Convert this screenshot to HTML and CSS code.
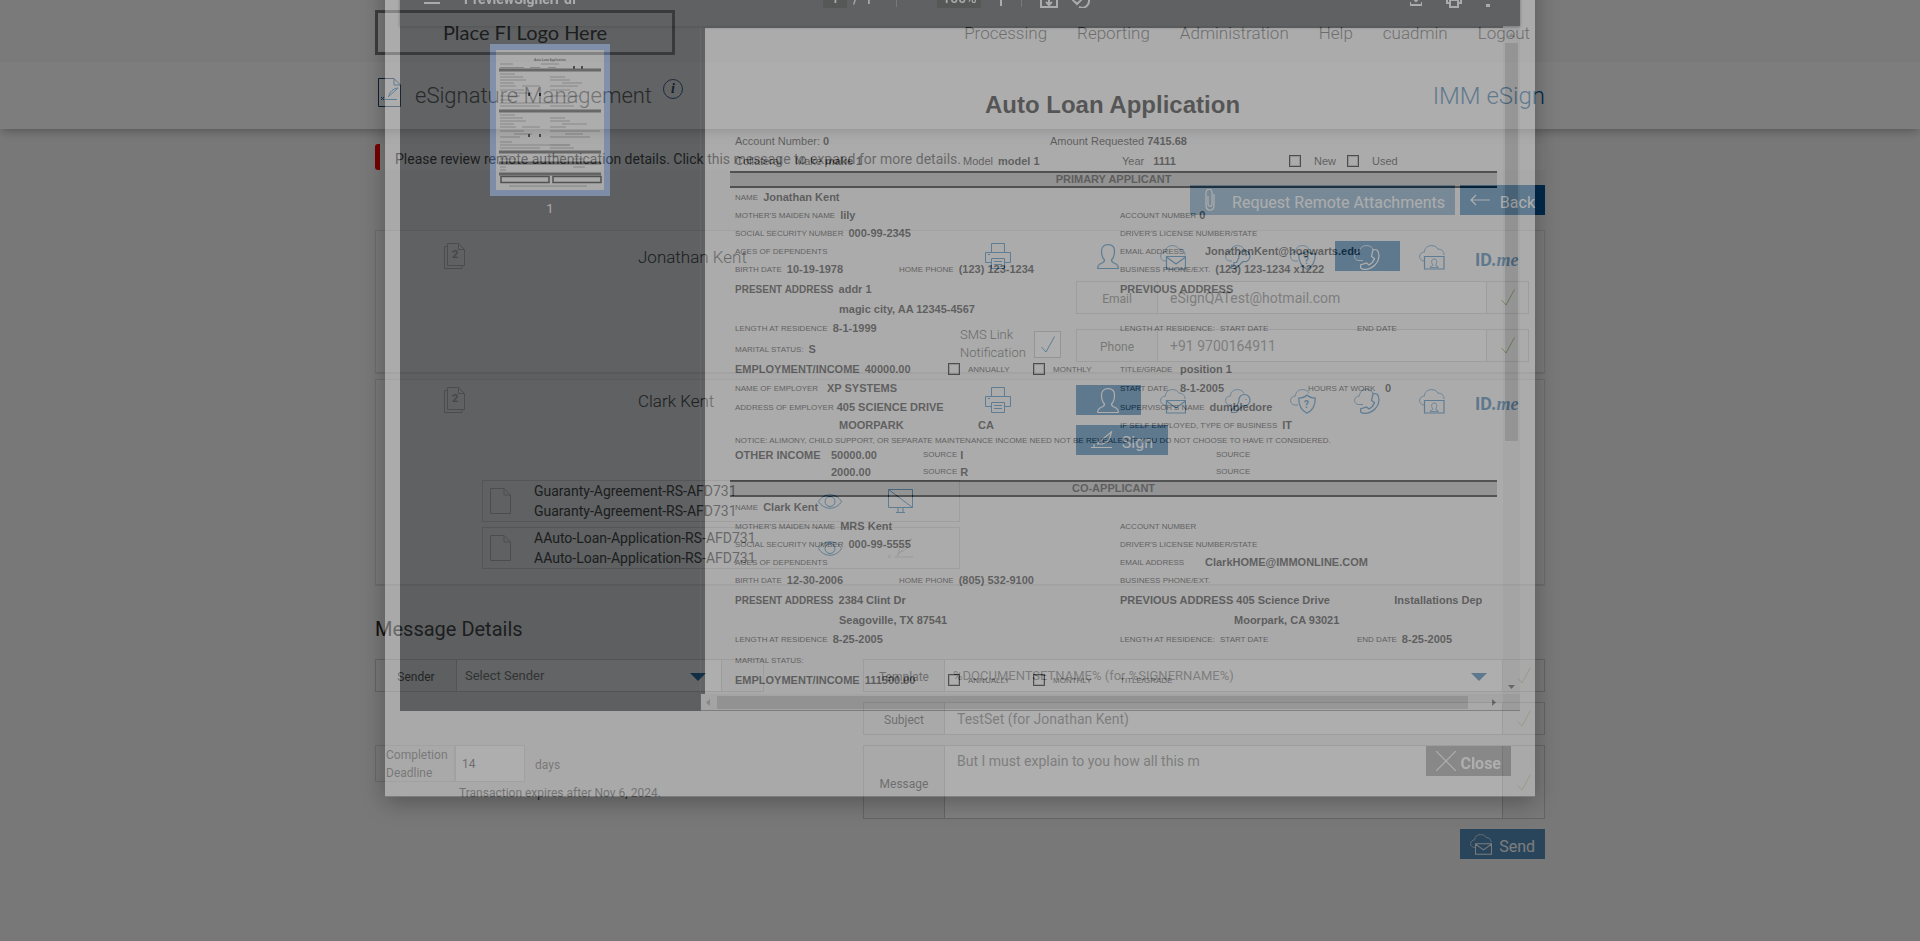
FILE: index.html
```html
<!doctype html>
<html lang="en">
    <head>
        <meta charset="UTF-8" />
        <meta name="viewport" content="width=device-width, initial-scale=1.0" />
        <title>eSignature Management</title>
        <link rel="stylesheet" href="styles.css">
    </head>
    <body>
        <!-- shared icons -->
        <svg class="sprite" aria-hidden="true">
            <symbol id="i-docs" viewBox="0 0 21 26">
                <path d="M3.500.500h11l6 6v16h-17zM14.500.500v6h6M3 3.500H.500v22h17.500V23" />
                <text x="8" y="15">2</text>
            </symbol>
            <symbol id="i-doc" viewBox="0 0 21 26">
                <path d="M.500.500h13.500l6.500 6.500v18.500H.500zM14 .500v6.500h6.500" />
            </symbol>
            <symbol id="i-print" viewBox="0 0 26 26">
                <path d="M6.500 9V.500h13V9M6.500 19.500h-6V9.500h25v10h-6M6.500 15.500h13v10h-13zM9 18.500h8M9 21.500h8M3 11.500h2" />
            </symbol>
            <symbol id="i-user" viewBox="0 0 22 26">
                <path d="M7.500 16C5 13.500 4.500 10 4.500 7c0-4 2.500-6.300 6.500-6.300S17.500 3 17.500 7c0 3-.500 6.500-3 9 0 2 1 2.500 3 3.200 2.500.800 3.800 2.300 3.800 5.300H.700c0-3 1.300-4.500 3.800-5.300 2-.700 3-1.200 3-3.200z" />
            </symbol>
            <symbol id="i-mail" viewBox="0 0 26 25">
                <path class="thin" d="M6 16C1.500 16 .500 13 .600 11 1 8.500 3 7 5.500 7 5.500 3 8.500.600 12.500.600c3.500 0 5.500 1.500 6.500 3.600 3.500-.200 6 2 6 5.800" />
                <path d="M6.500 11.500h19v12.500h-19zM6.500 12l9.500 7 9.500-7" />
            </symbol>
            <symbol id="i-key" viewBox="0 0 26 25">
                <path class="thin" d="M7 16H5C1.500 16 .500 13 .600 11 1 8.500 3 7 5.500 7 5.500 3 8.500.600 12.500.600c3.500 0 5.500 1.500 6.500 3.600" />
                <path d="M14 12.500a5.600 5.600 0 1 1 4 4L11 23.500H6.500V20H9v-2.500h2.500zM20.500 10.500h1" />
            </symbol>
            <symbol id="i-shield" viewBox="0 0 26 25">
                <path class="thin" d="M8 16H5C1.500 16 .500 13 .600 11 1 8.500 3 7 5.500 7 5.500 3 8.500.600 12.500.600c3.500 0 5.500 1.500 6.500 3.600" />
                <path d="M17 6c2 2 5 3 8.300 3 0 7.500-2.300 12.500-8.300 15.300C11 21.500 8.700 16.500 8.700 9 12 9 15 8 17 6z" />
                <text x="14" y="19">?</text>
            </symbol>
            <symbol id="i-phone" viewBox="0 0 26 25">
                <path class="thin" d="M9 15.500H5C1.500 15.500.500 13 .600 11 1 8.500 3 7 5.500 7 5.500 3 8.500.600 12.500.600c3.500 0 5.500 1.500 6.500 3.600" />
                <path d="M19 4.500l4 .500c1.500 1.500 2 4 2 6C24.500 18 19 23.500 12 24.300c-2 .200-4-.100-5.300-1.300L6.500 20l6-2 2.500 2c2.500-1.300 4.500-3.500 5.500-6.500l-3-2z" />
            </symbol>
            <symbol id="i-idcard" viewBox="0 0 26 25">
                <path class="thin" d="M5.500 16C1.500 16 .500 13 .600 11 1 8.500 3 7 5.500 7 5.500 3 8.500.600 12.500.600c3.500 0 5.500 1.500 6.500 3.600 3.500-.200 6 2 6 5.800" />
                <path d="M5.500 11.500h19.500v12.500H5.500z" />
                <path class="thin" d="M11 22.500c0-1.500 3-1.500 3-2.500-1-1-1.300-2-1.300-3.500 0-1.500 1-2.500 2.500-2.500s2.500 1 2.500 2.500c0 1.500-.300 2.500-1.300 3.500 0 1 3 1 3 2.500z" />
            </symbol>
            <symbol id="i-check" viewBox="0 0 14 17">
                <path d="M.500 11l4.500 5L13.500.500" />
            </symbol>
            <symbol id="i-eye" viewBox="0 0 24 15">
                <path d="M.500 7.500C6-1.500 18-1.500 23.500 7.500 18 16.500 6 16.500.500 7.500z" />
                <circle cx="12" cy="7.500" r="5" />
            </symbol>
            <symbol id="i-screen" viewBox="0 0 25 24">
                <path d="M.500.500h24v18H.500zM.500.500l24 18M10 19v4M15 19v4M8 23.500h9" />
            </symbol>
            <symbol id="i-feather" viewBox="0 0 25 20">
                <path d="M6 19h19M0 17l3 3M3 17l-3 3M9 18L24 1C16 3 10 8 11 14zM11 14c5 0 8-3 9-7" />
            </symbol>
            <symbol id="i-sign" viewBox="0 0 22 18">
                <path d="M0 16.500h21M3 13v3M6 13L20.500.800l-2.500 9-7 3.500M6 13h5" />
            </symbol>
        </svg>

        <header class="top-bar">
            <div class="wrap top-inner">
                <div class="logo">Place FI Logo Here</div>
                <nav class="main-nav">
                    <a href="#">Processing</a>
                    <a href="#">Reporting</a>
                    <a href="#">Administration</a>
                    <a href="#">Help</a>
                    <a href="#">cuadmin</a>
                    <a href="#">Logout</a>
                </nav>
            </div>
        </header>

        <div class="title-bar">
            <div class="wrap title-inner">
                <svg class="title-icon" viewBox="0 0 23 29">
                    <path d="M.500.500H16l6.500 6.500v21.500H.500z" />
                    <path class="feather" d="M16 .500v6.500h6.500M7 21.500h12M3 19l3 3M6 19l-3 3M10 19L20 10c-5 .500-8.500 4-9 8" />
                </svg>
                <h1>eSignature Management</h1>
                <span class="info">i</span>
                <span class="product">IMM eSign</span>
            </div>
        </div>

        <main class="wrap">
            <div class="alert">Please review remote authentication details. Click this message to expand for more details.</div>

            <div class="actions">
                <button type="button" class="btn btn-wide" disabled>
                    <svg class="icon" viewBox="0 0 10 22" width="10" height="22">
                        <path d="M9 5v11c0 7-8 7-8 0V4c0-5 6-5 6 0v11c0 3-4 3-4 0V7" />
                    </svg>
                    Request Remote Attachments
                </button>
                <button type="button" class="btn">
                    <svg class="icon arrow" viewBox="0 0 20 12" width="20" height="12">
                        <path d="M20 6H1M6 1L1 6l5 5" />
                    </svg>
                    Back
                </button>
            </div>

            <section class="signer signer-first">
                <div class="signer-info">
                    <div class="signer-name">
                        <svg class="icon muted docs"><use href="#i-docs" /></svg>
                        <span>Jonathan Kent</span>
                    </div>
                </div>
                <div class="signer-tools">
                    <button type="button" class="print" aria-label="Print"><svg class="icon"><use href="#i-print" /></svg></button>
                    <div class="sms">
                        <label for="sms-link">SMS Link Notification</label>
                        <span class="tick-box">
                            <input type="checkbox" id="sms-link" checked />
                            <svg class="icon"><use href="#i-check" /></svg>
                        </span>
                    </div>
                </div>
                <div class="auth">
                    <div class="auth-types">
                        <button type="button" aria-label="In person"><svg class="icon user"><use href="#i-user" /></svg></button>
                        <button type="button" aria-label="Email"><svg class="icon"><use href="#i-mail" /></svg></button>
                        <button type="button" aria-label="Password"><svg class="icon"><use href="#i-key" /></svg></button>
                        <button type="button" aria-label="Question"><svg class="icon"><use href="#i-shield" /></svg></button>
                        <button type="button" class="active" aria-label="Phone"><svg class="icon"><use href="#i-phone" /></svg></button>
                        <button type="button" aria-label="ID check"><svg class="icon"><use href="#i-idcard" /></svg></button>
                        <button type="button" class="idme">ID<i>.me</i></button>
                    </div>
                    <div class="field">
                        <label for="email">Email</label>
                        <input type="text" id="email" value="eSignQATest@hotmail.com" />
                        <span class="valid"><svg class="icon"><use href="#i-check" /></svg></span>
                    </div>
                    <div class="field field-phone">
                        <label for="phone">Phone</label>
                        <input type="text" id="phone" value="+91 9700164911" />
                        <span class="valid"><svg class="icon"><use href="#i-check" /></svg></span>
                    </div>
                </div>
            </section>

            <section class="signer">
                <div class="signer-info">
                    <div class="signer-name">
                        <svg class="icon muted docs"><use href="#i-docs" /></svg>
                        <span>Clark Kent</span>
                    </div>
                    <ul class="doc-list">
                        <li>
                            <svg class="icon muted doc"><use href="#i-doc" /></svg>
                            <p>Guaranty-Agreement-RS-AFD731<br />Guaranty-Agreement-RS-AFD731</p>
                            <svg class="icon eye"><use href="#i-eye" /></svg>
                            <svg class="icon screen"><use href="#i-screen" /></svg>
                        </li>
                        <li>
                            <svg class="icon muted doc"><use href="#i-doc" /></svg>
                            <p>AAuto-Loan-Application-RS-AFD731<br />AAuto-Loan-Application-RS-AFD731</p>
                            <svg class="icon eye"><use href="#i-eye" /></svg>
                            <svg class="icon screen faded"><use href="#i-feather" /></svg>
                        </li>
                    </ul>
                </div>
                <div class="signer-tools">
                    <button type="button" class="print" aria-label="Print"><svg class="icon"><use href="#i-print" /></svg></button>
                </div>
                <div class="auth">
                    <div class="auth-types">
                        <button type="button" class="active" aria-label="In person"><svg class="icon user"><use href="#i-user" /></svg></button>
                        <button type="button" aria-label="Email"><svg class="icon"><use href="#i-mail" /></svg></button>
                        <button type="button" aria-label="Password"><svg class="icon"><use href="#i-key" /></svg></button>
                        <button type="button" aria-label="Question"><svg class="icon"><use href="#i-shield" /></svg></button>
                        <button type="button" aria-label="Phone"><svg class="icon"><use href="#i-phone" /></svg></button>
                        <button type="button" aria-label="ID check"><svg class="icon"><use href="#i-idcard" /></svg></button>
                        <button type="button" class="idme">ID<i>.me</i></button>
                    </div>
                    <button type="button" class="btn btn-sign">
                        <svg class="icon" width="22" height="18"><use href="#i-sign" /></svg>
                        Sign
                    </button>
                </div>
            </section>

            <h2>Message Details</h2>
            <form class="message-form">
                <div class="form-left">
                    <div class="field">
                        <label for="sender">Sender</label>
                        <span class="select">
                            <select id="sender"><option>Select Sender</option></select>
                        </span>
                        <span class="valid"></span>
                    </div>
                    <div class="deadline">
                        <label for="days">Completion Deadline</label>
                        <input type="text" id="days" value="14" />
                        <span>days</span>
                    </div>
                    <p class="expires">Transaction expires after Nov 6, 2024.</p>
                </div>
                <div class="form-right">
                    <div class="field">
                        <label for="template">Template</label>
                        <span class="select">
                            <select id="template"><option>%DOCUMENTSETNAME% (for %SIGNERNAME%)</option></select>
                        </span>
                        <span class="valid"><svg class="icon"><use href="#i-check" /></svg></span>
                    </div>
                    <div class="field">
                        <label for="subject">Subject</label>
                        <input type="text" id="subject" value="TestSet (for Jonathan Kent)" />
                        <span class="valid"><svg class="icon"><use href="#i-check" /></svg></span>
                    </div>
                    <div class="field field-tall">
                        <label for="message">Message</label>
                        <textarea id="message">But I must explain to you how all this m</textarea>
                        <span class="valid"><svg class="icon"><use href="#i-check" /></svg></span>
                    </div>
                    <button type="button" class="btn btn-send" disabled>
                        <svg class="icon" width="22" height="21"><use href="#i-mail" /></svg>
                        Send
                    </button>
                </div>
            </form>
        </main>

        <div class="backdrop"></div>

        <!-- document preview, part way through its fade -->
        <div class="modal">
            <div class="dialog">
                <div class="viewer">
                    <div class="toolbar">
                        <svg class="tool menu" viewBox="0 0 16 12"><path d="M0 1h16M0 6h16M0 11h16" /></svg>
                        <span class="file-name">PreviewSignerPdf</span>
                        <div class="tool-center">
                            <span class="page-box">1</span>
                            <span>/</span>
                            <span>1</span>
                            <span class="divider"></span>
                            <span class="zoom-box">100%</span>
                            <svg class="tool plus" viewBox="0 0 14 14" width="14" height="14"><path d="M7 0v14M0 7h14" /></svg>
                            <span class="divider short"></span>
                            <svg class="tool" viewBox="0 0 18 18" width="18" height="18"><path d="M1 1h16v16H1zM9 4v10M6 12l3 3 3-3" /></svg>
                            <svg class="tool" viewBox="0 0 18 18" width="18" height="18"><path d="M3 5l5-3v5M8 4a7 7 0 1 1-1 13M1 10l4-4 4 4-4 4z" /></svg>
                        </div>
                        <div class="tool-right">
                            <svg class="tool" viewBox="0 0 12 14" width="12" height="14"><path d="M6 0v8M2 5l4 4 4-4M0 10v3h12v-3" /></svg>
                            <svg class="tool" viewBox="0 0 16 18" width="16" height="18"><path d="M4 5V1h8v4M4 13H1V5h14v8h-3M4 10h8v7H4z" /></svg>
                            <svg class="tool" viewBox="0 0 4 16" width="4" height="16"><path d="M1 1h2v1H1zM1 7h2v1H1zM1 14h2v1H1z" /></svg>
                        </div>
                    </div>
                    <div class="viewer-body">
                        <aside class="thumbs">
                            <svg class="thumb" viewBox="0 0 108 140">
                                <text x="54" y="11">Auto Loan Application</text>
                                <g class="bars">
                                    <path d="M3 20h102M3 61h102M3 102h102M3 113h102M3 124h102" />
                                </g>
                                <g class="lines">
                                    <path d="M4 14h13M45 14h18M4 17.500h24M34 17.500h10M52 17.500h8" />
                                    <path d="M4 24h15M4 27h23M54 27h15M4 30h26M54 30h20M4 33h14M66 33h20M4 36h16M26 36h18M54 36h28" />
                                    <path d="M4 40h24M54 40h20M18 43h18M4 46h20M54 46h30M4 50h12M4 53h50M54 53h20M4 56h40M54 56h24" />
                                    <path d="M4 65h15M4 68h23M54 68h15M4 71h26M54 71h20M4 74h14M66 74h25M4 77h16M26 77h18M54 77h16" />
                                    <path d="M4 81h24M54 81h50M18 84h18M69 84h18M4 87h20M54 87h40M4 92h12M4 95h70M54 95h20M4 98h40M54 98h24" />
                                    <path d="M4 106h10M54 106h14M4 109h16M77 109h10M4 117h6M77 117h12M4 120h6M13 136h78" />
                                </g>
                                <path class="boxes" d="M5 126.500h48v6H5zM57 126.500h48v6H57z" />
                                <path class="dots" d="M77 16h2v3h-2zM85 16h2v3h-2zM32 43h2v3h-2zM43 43h2v3h-2zM32 84h2v3h-2zM43 84h2v3h-2z" />
                            </svg>
                            <span>1</span>
                        </aside>
                        <div class="paper-area">
                            <article class="paper">
                                <h3>Auto Loan Application</h3>
                                <div class="row r20 big">
                                    <div class="half w315"><span>Account Number:</span><b class="near">0</b></div>
                                    <div class="half"><span>Amount Requested</span><b class="near">7415.68</b></div>
                                </div>
                                <div class="row r20 big">
                                    <span class="w60">Collateral</span>
                                    <span class="w168">Make<b class="near">make 1</b></span>
                                    <span class="w159">Model<b>model 1</b></span>
                                    <span class="w167">Year<b class="far">1111</b></span>
                                    <span class="check"><input type="checkbox" id="new" /><label for="new">New</label></span>
                                    <span class="check"><input type="checkbox" id="used" /><label for="used">Used</label></span>
                                </div>
                                <h4>PRIMARY APPLICANT</h4>
                                <div class="row"><span>NAME</span><b>Jonathan Kent</b></div>
                                <div class="row">
                                    <div class="half"><span>MOTHER'S MAIDEN NAME</span><b>lily</b></div>
                                    <div class="half"><span>ACCOUNT NUMBER</span><b class="near">0</b></div>
                                </div>
                                <div class="row">
                                    <div class="half"><span>SOCIAL SECURITY NUMBER</span><b>000-99-2345</b></div>
                                    <div class="half"><span>DRIVER'S LICENSE NUMBER/STATE</span></div>
                                </div>
                                <div class="row">
                                    <div class="half"><span>AGES OF DEPENDENTS</span></div>
                                    <div class="half"><span class="w80">EMAIL ADDRESS</span><b>JonathanKent@hogwarts.edu</b></div>
                                </div>
                                <div class="row">
                                    <div class="half"><div class="w164"><span>BIRTH DATE</span><b>10-19-1978</b></div><span>HOME PHONE</span><b>(123) 123-1234</b></div>
                                    <div class="half"><span>BUSINESS PHONE/EXT.</span><b>(123) 123-1234 x1222</b></div>
                                </div>
                                <div class="row r22">
                                    <div class="half"><strong>PRESENT ADDRESS</strong><b>addr 1</b></div>
                                    <div class="half"><em>PREVIOUS ADDRESS</em></div>
                                </div>
                                <div class="row"><b class="indent">magic city, AA 12345-4567</b></div>
                                <div class="row r20">
                                    <div class="half"><span>LENGTH AT RESIDENCE</span><b>8-1-1999</b></div>
                                    <div class="half"><span class="w100">LENGTH AT RESIDENCE:</span><span class="w137">START DATE</span><span>END DATE</span></div>
                                </div>
                                <div class="row r22"><span>MARITAL STATUS:</span><b>S</b></div>
                                <div class="row">
                                    <div class="half">
                                        <div class="w213"><em>EMPLOYMENT/INCOME</em><b>40000.00</b></div>
                                        <span class="check"><input type="checkbox" id="annual-1" /><label for="annual-1">ANNUALLY</label></span>
                                        <span class="check"><input type="checkbox" id="month-1" /><label for="month-1">MONTHLY</label></span>
                                    </div>
                                    <div class="half"><span class="w55">TITLE/GRADE</span><b>position 1</b></div>
                                </div>
                                <div class="row r20">
                                    <div class="half"><span class="w87">NAME OF EMPLOYER</span><b>XP SYSTEMS</b></div>
                                    <div class="half"><div class="w188"><span class="w55">START DATE</span><b>8-1-2005</b></div><span class="w72">HOURS AT WORK</span><b>0</b></div>
                                </div>
                                <div class="row">
                                    <div class="half"><span>ADDRESS OF EMPLOYER</span><b class="near">405 SCIENCE DRIVE</b></div>
                                    <div class="half"><span>SUPERVISOR'S NAME</span><b>dumbledore</b></div>
                                </div>
                                <div class="row">
                                    <div class="half"><b class="indent w134">MOORPARK</b><b>CA</b></div>
                                    <div class="half"><span>IF SELF EMPLOYED, TYPE OF BUSINESS</span><b>IT</b></div>
                                </div>
                                <div class="row r12"><span>NOTICE: ALIMONY, CHILD SUPPORT, OR SEPARATE MAINTENANCE INCOME NEED NOT BE REVEALED IF YOU DO NOT CHOOSE TO HAVE IT CONSIDERED.</span></div>
                                <div class="row r17">
                                    <div class="half"><div class="w188"><em class="w91">OTHER INCOME</em><b>50000.00</b></div><span>SOURCE</span><b class="near">I</b></div>
                                    <div class="half"><span class="source">SOURCE</span></div>
                                </div>
                                <div class="row r17">
                                    <div class="half"><div class="w188"><em class="w91"></em><b>2000.00</b></div><span>SOURCE</span><b class="near">R</b></div>
                                    <div class="half"><span class="source">SOURCE</span></div>
                                </div>
                                <h4>CO-APPLICANT</h4>
                                <div class="row r20"><span>NAME</span><b>Clark Kent</b></div>
                                <div class="row">
                                    <div class="half"><span>MOTHER'S MAIDEN NAME</span><b>MRS Kent</b></div>
                                    <div class="half"><span>ACCOUNT NUMBER</span></div>
                                </div>
                                <div class="row">
                                    <div class="half"><span>SOCIAL SECURITY NUMBER</span><b>000-99-5555</b></div>
                                    <div class="half"><span>DRIVER'S LICENSE NUMBER/STATE</span></div>
                                </div>
                                <div class="row">
                                    <div class="half"><span>AGES OF DEPENDENTS</span></div>
                                    <div class="half"><span class="w80">EMAIL ADDRESS</span><b>ClarkHOME@IMMONLINE.COM</b></div>
                                </div>
                                <div class="row">
                                    <div class="half"><div class="w164"><span>BIRTH DATE</span><b>12-30-2006</b></div><span>HOME PHONE</span><b>(805) 532-9100</b></div>
                                    <div class="half"><span>BUSINESS PHONE/EXT.</span></div>
                                </div>
                                <div class="row r22">
                                    <div class="half"><strong>PRESENT ADDRESS</strong><b>2384 Clint Dr</b></div>
                                    <div class="half"><em>PREVIOUS ADDRESS</em><b class="near w153">405 Science Drive</b><b>Installations Dep</b></div>
                                </div>
                                <div class="row">
                                    <div class="half"><b class="indent">Seagoville, TX 87541</b></div>
                                    <div class="half"><b class="indent-right">Moorpark, CA 93021</b></div>
                                </div>
                                <div class="row r20">
                                    <div class="half"><span>LENGTH AT RESIDENCE</span><b>8-25-2005</b></div>
                                    <div class="half"><span class="w100">LENGTH AT RESIDENCE:</span><span class="w137">START DATE</span><span>END DATE</span><b>8-25-2005</b></div>
                                </div>
                                <div class="row r22"><span>MARITAL STATUS:</span></div>
                                <div class="row">
                                    <div class="half">
                                        <div class="w213"><em>EMPLOYMENT/INCOME</em><b>111500.00</b></div>
                                        <span class="check"><input type="checkbox" id="annual-2" /><label for="annual-2">ANNUALLY</label></span>
                                        <span class="check"><input type="checkbox" id="month-2" /><label for="month-2">MONTHLY</label></span>
                                    </div>
                                    <div class="half"><span>TITLE/GRADE</span></div>
                                </div>
                            </article>
                            <div class="v-scroll">
                                <svg viewBox="0 0 7 4"><path d="M0 4l3.500-4L7 4z" /></svg>
                                <div class="v-thumb"></div>
                                <svg class="on" viewBox="0 0 7 4"><path d="M0 0l3.500 4L7 0z" /></svg>
                            </div>
                            <div class="h-scroll">
                                <svg viewBox="0 0 4 7"><path d="M4 0L0 3.500 4 7z" /></svg>
                                <div class="h-thumb"></div>
                                <svg class="on" viewBox="0 0 4 7"><path d="M0 0l4 3.500L0 7z" /></svg>
                            </div>
                            <div class="corner"></div>
                        </div>
                    </div>
                </div>
                <div class="dialog-footer">
                    <button type="button" class="btn btn-close">
                        <svg class="icon" viewBox="0 0 20 20" width="20" height="20"><path d="M0 0l20 20M20 0L0 20" /></svg>
                        Close
                    </button>
                </div>
            </div>
        </div>
    </body>
</html>
```
FILE: styles.css
```css
* {
    box-sizing: border-box;
}
body {
    margin: 0;
    min-height: 100vh;
    overflow: hidden;
    background-color: #f0f0f0;
    color: #222222;
    font-family: Roboto, "Liberation Sans", sans-serif;
    font-size: 14px;
    font-weight: 300;
}
p,
h1,
h2,
h3,
h4,
ul {
    margin: 0;
    padding: 0;
    font-weight: 300;
}
button,
input,
select,
textarea {
    font: inherit;
    color: inherit;
    border: none;
    border-radius: 0;
    padding: 0;
    background: none;
}
.sprite {
    position: absolute;
    width: 0;
    height: 0;
}
.wrap {
    width: 100%;
    max-width: 1170px;
    margin: 0 auto;
}
.icon {
    fill: none;
    stroke: #0062a8;
    stroke-width: 1.2;
    flex: none;
}
#i-docs text,
#i-shield text {
    font-size: 10px;
    font-weight: 700;
    stroke: none;
    fill: #0062a8;
}
#i-docs text {
    font-size: 11px;
    fill: #a4a4a4;
}
.thin {
    stroke-width: 0.8;
}
.muted {
    stroke: #b4b4b4;
    stroke-width: 1;
}

/* header */
.top-bar {
    background-color: #f4f4f4;
    height: 62px;
}
.top-inner {
    display: flex;
    justify-content: space-between;
    padding-top: 10px;
}
.logo {
    width: 300px;
    height: 45px;
    border: 3px solid #7a7a7a;
    font-family: Lato, sans-serif;
    font-size: 20px;
    font-weight: 400;
    line-height: 38px;
    text-align: center;
}
.main-nav {
    display: flex;
    gap: 30px;
    padding: 12px 15px 0 0;
    font-size: 17px;
    line-height: 22px;
}
.main-nav a {
    color: #333333;
    text-decoration: none;
}
.title-bar {
    position: relative;
    height: 67px;
    background-color: #fbfbfb;
    box-shadow: 0 5px 8px -2px rgba(0, 0, 0, 0.25);
}
.title-inner {
    display: flex;
    align-items: flex-start;
    padding-top: 16px;
    font-size: 24px;
    line-height: 36px;
}
.title-icon {
    width: 23px;
    height: 29px;
    margin: 0 14px 0 3px;
    fill: none;
    stroke: #1f3c66;
}
.feather {
    stroke: #0062a8;
}
h1 {
    color: #444444;
    font-size: 22px;
}
.info {
    width: 20px;
    height: 20px;
    margin: 1px 0 0 11px;
    border: 1px solid #1f4a78;
    border-radius: 50%;
    color: #102a4a;
    font: italic bold 14px/18px "Liberation Serif", serif;
    text-align: center;
}
.product {
    margin-left: auto;
    color: #005599;
}

/* notice and page actions */
.alert {
    margin-top: 15px;
    height: 26px;
    padding-left: 15px;
    border-left: 5px solid #ee0000;
    border-radius: 3px;
    background-color: #f6f6f6;
    font-weight: 400;
    line-height: 30px;
}
.actions {
    display: flex;
    justify-content: flex-end;
    gap: 5px;
    margin: 15px 0;
}
.btn {
    display: flex;
    align-items: center;
    justify-content: space-between;
    width: 85px;
    height: 30px;
    padding: 4px 10px 0;
    background-color: #005599;
    color: #ffffff;
    font-size: 16px;
    font-weight: 400;
}
.btn .icon {
    stroke: #ffffff;
    margin-top: -4px;
}
.btn:disabled {
    opacity: 0.65;
}
.btn-wide {
    width: 265px;
    padding: 4px 10px 0 15px;
}

/* signer cards */
.signer {
    display: grid;
    grid-template-columns: 1fr 116px 453px;
    margin-bottom: 6px;
    padding: 5px 15px 15px 0;
    border: 1px solid #d8d8d8;
    box-shadow: 0 1px 0 #dddddd;
    background-color: #f4f4f4;
}
.signer-first {
    padding: 10px 15px 10px 0;
}
.signer-name {
    display: flex;
    align-items: center;
    height: 30px;
    padding-left: 68px;
    font-size: 17px;
}
.signer-name span {
    margin: 2px 0 0 173px;
}
.docs,
.doc {
    width: 21px;
    height: 26px;
}
.print {
    display: block;
    height: 26px;
    margin: 2px 0 0 25px;
}
.print .icon {
    width: 26px;
    height: 26px;
    stroke-width: 1;
}
.sms {
    display: flex;
    justify-content: space-between;
    align-items: center;
    margin-top: 57px;
    padding-right: 15px;
    font-size: 13px;
    line-height: 18px;
}
.sms label {
    width: 70px;
}
.tick-box {
    position: relative;
    width: 27px;
    height: 27px;
}
.tick-box input {
    appearance: none;
    width: 27px;
    height: 27px;
    margin: 0;
    border: 1px solid #b0b0b0;
    background-color: #ffffff;
}
.tick-box .icon {
    position: absolute;
    top: 5px;
    left: 7px;
    width: 14px;
    height: 17px;
    stroke-width: 1;
}
.auth-types {
    display: flex;
    margin-bottom: 10px;
}
.auth-types button {
    flex: 1;
    height: 30px;
    line-height: 30px;
}
.auth-types .icon {
    width: 26px;
    height: 25px;
    margin-top: 4px;
    vertical-align: top;
}
.auth-types .user {
    width: 22px;
    height: 26px;
    margin-top: 3px;
}
.auth-types .active {
    background-color: #005599;
}
.active .icon {
    stroke: #ffffff;
}
.auth-types .idme {
    padding-top: 4px;
    color: #005599;
    font-size: 18px;
    font-weight: 700;
}
.idme i {
    font-family: "Liberation Serif", serif;
}
.field {
    display: flex;
    height: 33px;
    border: 1px solid #c8c8c8;
}
.field-phone {
    margin-top: 15px;
}
.field label {
    width: 80px;
    flex: none;
    font-size: 12px;
    font-weight: 400;
    line-height: 34px;
    text-align: center;
    color: #555555;
}
.field input,
.field textarea,
.select {
    flex: 1;
    min-width: 0;
    padding: 0 12px;
    border: solid #c8c8c8;
    border-width: 0 1px;
    background-color: #ffffff;
    color: #666666;
    font-size: 14px;
    font-weight: 400;
}
.valid {
    display: flex;
    align-items: center;
    justify-content: center;
    flex: none;
    width: 41px;
}
.valid .icon {
    width: 14px;
    height: 17px;
    stroke: #6a9a1c;
    stroke-width: 1;
}
.btn-sign {
    width: 92px;
    padding: 4px 15px 0;
}
.doc-list {
    list-style: none;
    margin: 65px 0 0 106px;
}
.doc-list li {
    display: flex;
    align-items: center;
    height: 42px;
    padding-left: 7px;
    border: 1px solid #d0d0d0;
}
.doc-list li + li {
    margin-top: 5px;
}
.doc-list p {
    width: 284px;
    margin-left: 23px;
    font-weight: 400;
    line-height: 20px;
}
.eye {
    width: 24px;
    height: 15px;
    stroke-width: 1;
}
.screen {
    width: 25px;
    height: 24px;
    margin-left: 46px;
    stroke-width: 1;
}
.faded {
    opacity: 0.25;
    stroke: #222222;
}

/* message details */
h2 {
    margin: 29px 0 15px;
    font-size: 20px;
    font-weight: 400;
    line-height: 30px;
}
.message-form {
    display: grid;
    grid-template-columns: 389px 682px;
    justify-content: space-between;
}
.form-right {
    display: grid;
    gap: 10px;
}
.message-form .field label {
    color: #333333;
}
.message-form .valid .icon {
    opacity: 0.5;
}
.select {
    position: relative;
    padding: 0;
}
.select::after {
    content: "";
    position: absolute;
    top: 13px;
    right: 15px;
    border: solid transparent;
    border-width: 8px 8px 0;
    border-top-color: #005599;
}
select {
    appearance: none;
    width: 100%;
    height: 31px;
    padding: 0 8px;
    font-size: 13px;
}
#template {
    padding: 0 8px;
}
.message-form .field-tall {
    height: 74px;
}
.field-tall label {
    line-height: 76px;
}
.field-tall textarea {
    padding-top: 7px;
    resize: none;
}
.btn-send {
    justify-self: end;
}
.deadline {
    display: flex;
    align-items: center;
    height: 37px;
    margin-top: 53px;
    color: #555555;
    font-size: 12px;
    font-weight: 400;
}
.deadline label {
    width: 80px;
    height: 37px;
    padding-left: 10px;
    border: 1px solid #d4d4d4;
    line-height: 18px;
}
.deadline input {
    width: 70px;
    height: 37px;
    padding-left: 6px;
    border: 1px solid #d4d4d4;
    background-color: #ffffff;
    color: #333333;
}
.deadline span {
    margin: 2px 0 0 10px;
}
.expires {
    padding-left: 84px;
    color: #444444;
    font-size: 12px;
    font-weight: 400;
    line-height: 22px;
}

/* preview dialog */
.backdrop {
    position: fixed;
    inset: 0;
    background-color: rgba(0, 0, 0, 0.5);
}
.modal {
    position: fixed;
    inset: 0;
    opacity: 0.37;
}
.dialog {
    max-width: 1150px;
    margin: -45px auto 0;
    padding: 15px;
    background-color: #ffffff;
    border-bottom: 1px solid #888888;
    box-shadow: 0 5px 22px rgba(0, 0, 0, 0.8);
}
.toolbar {
    position: relative;
    display: flex;
    align-items: center;
    height: 56px;
    padding: 2px 30px 0 24px;
    background-color: #323639;
    box-shadow: 0 1px 3px rgba(0, 0, 0, 0.6);
    color: #ffffff;
    font-size: 14px;
    font-weight: 700;
}
.tool {
    fill: none;
    stroke: #ffffff;
    stroke-width: 2;
}
.menu {
    width: 16px;
    height: 12px;
    margin: -2px 24px 0 0;
}
.file-name {
    width: 112px;
}
.tool-center {
    display: flex;
    align-items: center;
    gap: 6px;
    margin-left: 247px;
    font-weight: 500;
}
.page-box,
.zoom-box {
    width: 24px;
    height: 18px;
    background-color: #191b1c;
    line-height: 16px;
    text-align: center;
}
.zoom-box {
    width: 44px;
    margin-left: 34px;
}
.plus {
    margin: 0 7px;
}
.divider {
    width: 1px;
    height: 16px;
    margin-left: 18px;
    background-color: #70757a;
}
.short {
    margin: 0 12px 0 0;
}
.tool-center .tool + .tool {
    margin-left: 8px;
}
.tool-right {
    display: flex;
    align-items: center;
    gap: 24px;
    margin-left: auto;
}
.viewer-body {
    display: flex;
    height: 685px;
    background-color: #323639;
}
.thumbs {
    width: 300px;
    padding-top: 18px;
    color: #ffffff;
    font-size: 13px;
    font-weight: 400;
    text-align: center;
}
.thumb {
    display: block;
    width: 120px;
    height: 152px;
    margin: 0 auto 5px;
    border: 6px solid #8ab4f8;
    background-color: #ffffff;
    fill: none;
    stroke: #555555;
}
.thumb text {
    fill: #333333;
    stroke: none;
    font: bold 3px "Liberation Sans", sans-serif;
    text-anchor: middle;
}
.bars {
    stroke: #444444;
    stroke-width: 3;
}
.lines {
    stroke: #999999;
    stroke-width: 1;
}
.boxes {
    stroke: #111111;
    stroke-width: 1.5;
}
.dots {
    fill: #000000;
    stroke: none;
}
.paper-area {
    flex: 1;
    display: grid;
    grid-template-columns: 1fr 17px;
    grid-template-rows: 668px 17px;
    min-width: 0;
    border-left: 1px solid #42474b;
}
.paper {
    margin: 2px 0 0 4px;
    padding: 51px 6px 0 25px;
    overflow: hidden;
    background-color: #ffffff;
    color: #333333;
    font-family: "Liberation Sans", Arial, sans-serif;
    font-size: 8px;
    font-weight: 400;
    white-space: nowrap;
}
.paper h3 {
    padding-right: 2px;
    font-size: 24px;
    font-weight: 700;
    line-height: 52px;
    text-align: center;
    color: #111111;
}
.paper h4 {
    height: 17px;
    border: solid #111111;
    border-width: 2px 0;
    background-color: #c0c0c0;
    font-size: 11px;
    font-weight: 700;
    line-height: 13px;
    text-align: center;
}
.row {
    display: flex;
    align-items: center;
    height: 18px;
    padding-left: 5px;
}
.r12 {
    height: 12px;
}
.r17 {
    height: 17px;
}
.r20 {
    height: 20px;
}
.r22 {
    height: 22px;
}
.row span,
.row b,
.row em,
.row strong,
.row div {
    flex: none;
}
.half,
.half div {
    display: flex;
    align-items: center;
    width: 385px;
}
.row b {
    margin-left: 5px;
    font-size: 11px;
}
.row b.near {
    margin-left: 3px;
}
.row b.far {
    margin-left: 9px;
}
.row strong,
.row em {
    font-size: 10px;
    font-style: normal;
    font-weight: 700;
}
.row em {
    font-size: 11px;
}
.row b.indent {
    margin-left: 104px;
}
.row b.indent-right {
    margin-left: 114px;
}
.big {
    font-size: 11px;
}
.source {
    padding-left: 96px;
}
.row .w55 { width: 55px; }
.row .w60 { width: 60px; }
.row .w72 { width: 72px; }
.row .w80 { width: 80px; }
.row .w87 { width: 87px; }
.row .w91 { width: 91px; }
.row .w100 { width: 100px; }
.row .w134 { width: 134px; }
.row .w137 { width: 137px; }
.row .w153 { width: 153px; }
.row .w159 { width: 159px; }
.row .w164 { width: 164px; }
.row .w167 { width: 167px; }
.row .w168 { width: 168px; }
.row .w188 { width: 188px; }
.row .w213 { width: 213px; }
.row .w315 { width: 315px; }
.check {
    display: flex;
    align-items: center;
    width: 85px;
}
.big .check {
    width: 58px;
}
.check input {
    appearance: none;
    width: 12px;
    height: 12px;
    margin: 0 8px 0 0;
    border: 1px solid #000000;
    outline: 1px solid #bbbbbb;
    outline-offset: -2px;
}
.big .check input {
    margin-right: 13px;
}
.v-scroll,
.h-scroll {
    display: flex;
    align-items: center;
    background-color: #f1f1f1;
}
.v-scroll {
    flex-direction: column;
    padding: 7px 0 5px;
}
.v-scroll svg {
    width: 7px;
    height: 4px;
    fill: #a0a0a0;
}
.v-thumb {
    width: 13px;
    height: 398px;
    margin: 6px 0 auto;
    background-color: #c1c1c1;
}
.h-scroll {
    padding: 0 7px 0 5px;
    border-bottom: 1px solid #888888;
}
.h-scroll svg {
    width: 4px;
    height: 7px;
    fill: #a0a0a0;
}
.h-thumb {
    width: 95%;
    height: 13px;
    margin: 0 auto 0 7px;
    background-color: #c1c1c1;
}
.v-scroll .on,
.h-scroll .on {
    fill: #505050;
}
.corner {
    background-color: #dcdcdc;
    border-bottom: 1px solid #888888;
}
.dialog-footer {
    display: flex;
    justify-content: flex-end;
    padding: 35px 9px 5px 0;
}
.btn-close {
    background-color: #999999;
    font-weight: 700;
}
```
